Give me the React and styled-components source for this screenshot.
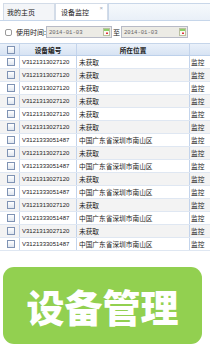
import React from "react";
import styled, { createGlobalStyle } from "styled-components";

const Global = createGlobalStyle`
  html, body { margin: 0; padding: 0; background: #ffffff; }
  body { width: 210px; height: 350px; overflow: hidden; font-family: "Liberation Sans", "Noto Sans CJK SC", sans-serif; }
  * { box-sizing: border-box; }
`;

const Page = styled.div`
  width: 210px;
  height: 350px;
  display: flex;
  flex-direction: column;
  overflow: hidden;
  background: #fff;
`;

const TabBar = styled.div`
  height: 21px;
  padding-top: 3px;
  display: flex;
  align-items: stretch;
  border-bottom: 1px solid #c6d6ea;
`;

const Tab = styled.div`
  width: ${(p) => p.$w}px;
  margin-left: ${(p) => p.$ml || 0}px;
  display: flex;
  align-items: center;
  position: relative;
  padding-left: ${(p) => p.$pl}px;
  font-family: "Noto Sans CJK SC", sans-serif;
  font-size: 7px;
  color: #222;
  background: ${(p) => (p.$active ? "#ffffff" : "#f3f5f8")};
  border: 1px solid #d3dce8;
  border-bottom: none;
`;

const Close = styled.span`
  position: absolute;
  right: 4px;
  top: 1px;
  font-size: 6px;
  color: #9aa6b6;
  font-family: "Liberation Sans", sans-serif;
`;

const TabFill = styled.div`
  flex: 1;
  background: linear-gradient(#f6f9fc, #e9f0f8);
  border: 1px solid #c9d7e9;
  border-bottom: none;
  border-right: none;
`;

const Filter = styled.div`
  height: 22px;
  display: flex;
  align-items: center;
  padding-left: 5px;
`;

const FilterCheck = styled.span`
  width: 7px;
  height: 7px;
  border: 1px solid #9a9a9a;
  border-radius: 2px;
  background: #fff;
  margin-top: 1px;
`;

const Label = styled.span`
  font-family: "Noto Sans CJK SC", sans-serif;
  font-size: 7px;
  color: #222;
  margin-left: ${(p) => p.$ml || 0}px;
  margin-right: ${(p) => p.$mr || 0}px;
`;

const DateInput = styled.div`
  width: ${(p) => p.$w}px;
  height: 12px;
  display: flex;
  align-items: center;
  justify-content: space-between;
  padding: 0 1px 0 2px;
  background: #ecebe5;
  border: 1px solid #b7bac6;
  font-family: "Liberation Mono", monospace;
  font-size: 5.6px;
  color: #666;
`;

const CalIcon = () => (
  <svg width="7" height="8" viewBox="0 0 7 8">
    <rect x="0.5" y="0.5" width="6" height="7" fill="#fbfbf4" stroke="#b9c0a0" />
    <rect x="1" y="1" width="5" height="2" fill="#8fd06a" />
    <rect x="3" y="4.5" width="2" height="1.5" fill="#e0303a" />
  </svg>
);

const Table = styled.div`
  width: 210px;
  overflow: hidden;
`;

const Row = styled.div`
  display: grid;
  grid-template-columns: 20px 57px 113px 40px;
  width: 230px;
  height: 13px;
  background: ${(p) =>
    p.$head ? "linear-gradient(#eaf1fa, #d7e3f3)" : p.$alt ? "#f3f3f3" : "#ffffff"};
  border-top: ${(p) => (p.$head ? "1px solid #c5d5ea" : "none")};
  border-bottom: 1px solid ${(p) => (p.$head ? "#bcd0ea" : "#dfe7f2")};
`;

const Cell = styled.div`
  display: flex;
  align-items: center;
  justify-content: ${(p) => (p.$center ? "center" : "flex-start")};
  padding-left: ${(p) => (p.$center ? 0 : p.$pl ?? 2)}px;
  border-right: 1px solid #c3d4ec;
  white-space: nowrap;
  overflow: hidden;
  font-family: ${(p) => (p.$code ? '"Liberation Sans", sans-serif' : '"Noto Sans CJK SC", sans-serif')};
  font-size: ${(p) => (p.$code ? 6 : 6.7)}px;
  font-weight: ${(p) => (p.$bold ? 700 : 400)};
  color: #222;
`;

const Box = styled.span`
  width: 8px;
  height: 8px;
  margin-left: 5px;
  border: 1px solid #7f93b4;
  background: linear-gradient(#ffffff, #dfe6ef);
`;

const Banner = styled.div`
  margin: 16px 8px 0 3px;
  height: 77px;
  border-radius: 11px;
  background: #92d050;
  display: flex;
  align-items: center;
  justify-content: center;
  color: #ffffff;
  font-family: "Noto Sans CJK SC", sans-serif;
  font-weight: 900;
  font-size: 38px;
  line-height: 1;
`;

const A = { code: "V3121313027120", loc: "未获取" };
const B = { code: "V3121333051487", loc: "中国广东省深圳市南山区" };
const rows = [A, A, A, A, A, A, B, A, B, A, B, A, B, A, B];

export default function App() {
  return (
    <Page>
      <Global />
      <TabBar>
        <Tab $w={52} $ml={3} $pl={3}>我的主页</Tab>
        <Tab $w={53} $pl={5} $active>
          设备监控
          <Close>×</Close>
        </Tab>
        <TabFill />
      </TabBar>
      <Filter>
        <FilterCheck />
        <Label $ml={4}>使用时间:</Label>
        <DateInput $w={66}>
          2014-01-03
          <CalIcon />
        </DateInput>
        <Label $ml={1} $mr={1}>至</Label>
        <DateInput $w={67}>
          2014-01-03
          <CalIcon />
        </DateInput>
      </Filter>
      <Table>
        <Row $head>
          <Cell><Box /></Cell>
          <Cell $center $bold>设备编号</Cell>
          <Cell $center $bold>所在位置</Cell>
          <Cell />
        </Row>
        {rows.map((r, i) => (
          <Row key={i} $alt={i % 2 === 1}>
            <Cell><Box /></Cell>
            <Cell $code>{r.code}</Cell>
            <Cell>{r.loc}</Cell>
            <Cell $pl={1}>监控</Cell>
          </Row>
        ))}
      </Table>
      <Banner>设备管理</Banner>
    </Page>
  );
}
